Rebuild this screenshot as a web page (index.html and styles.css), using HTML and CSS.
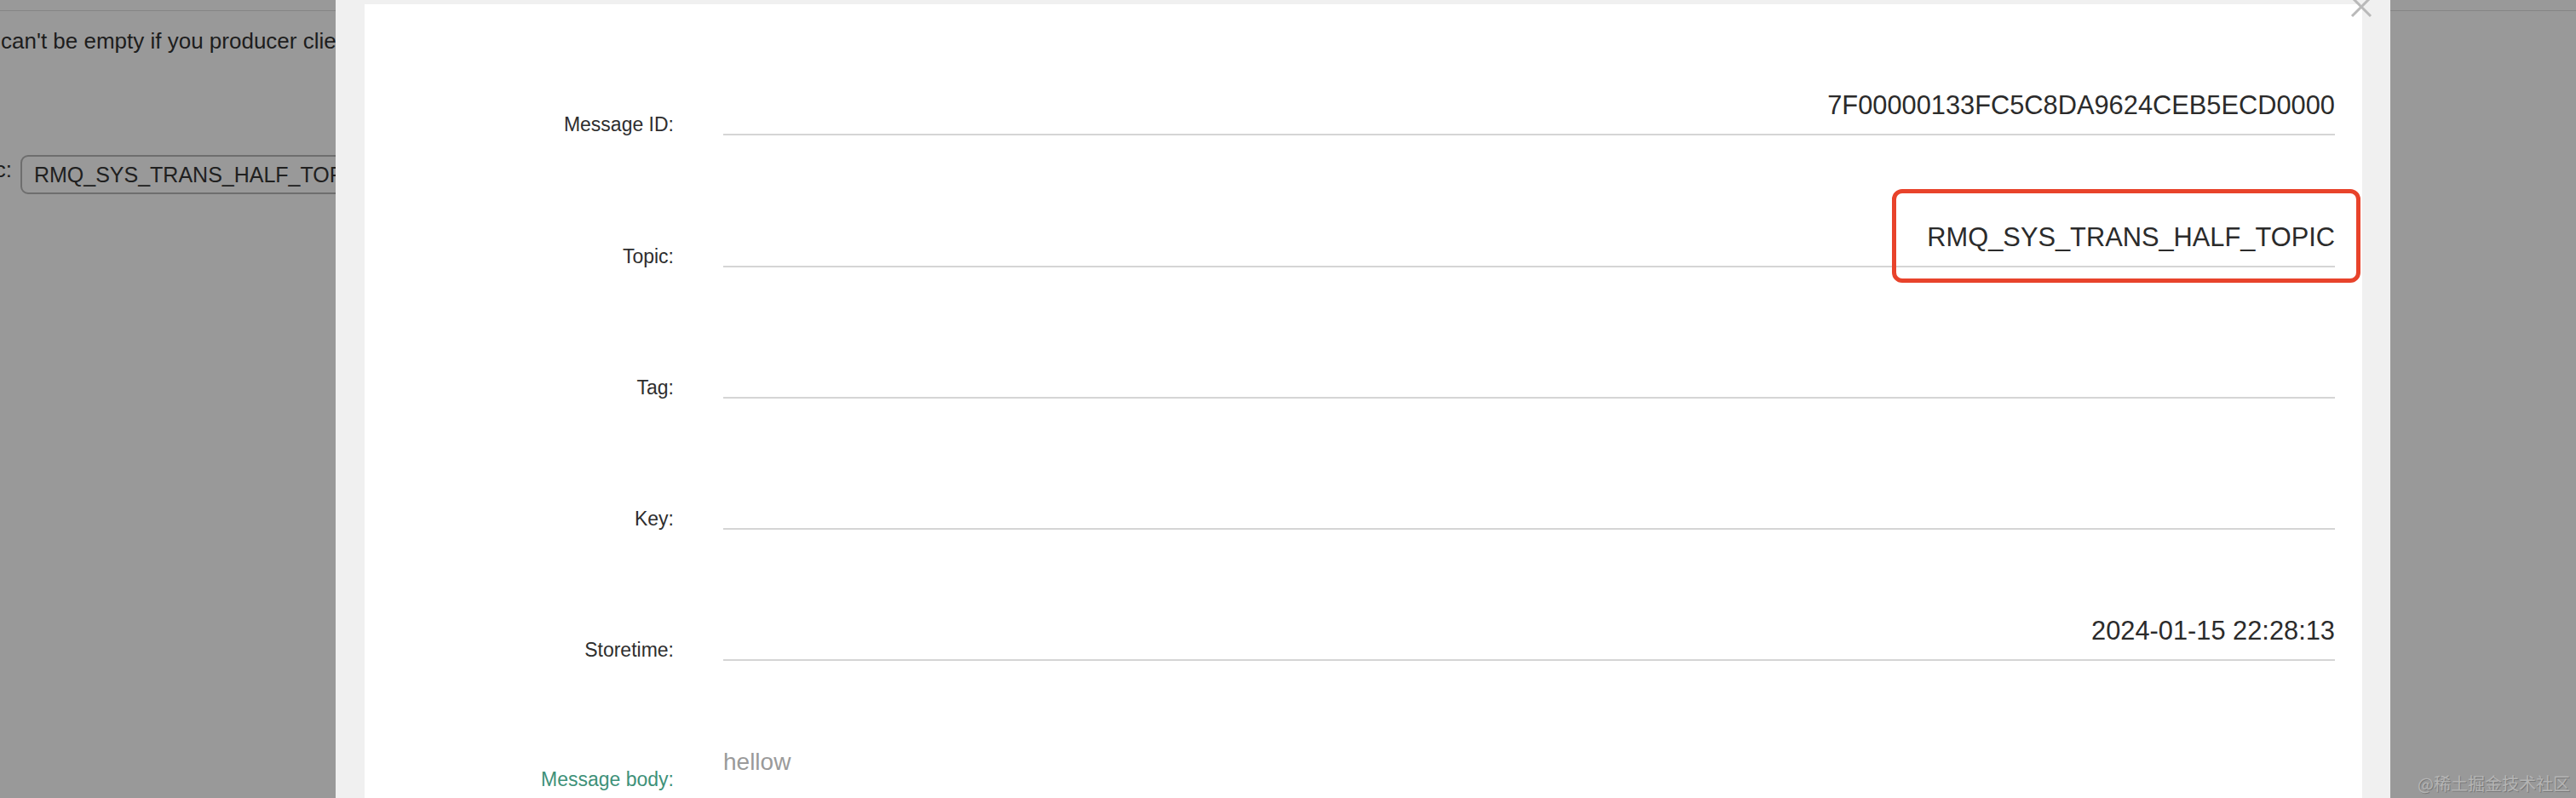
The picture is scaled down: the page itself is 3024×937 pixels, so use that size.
FILE: index.html
```html
<!DOCTYPE html>
<html lang="en">
<head>
<meta charset="utf-8">
<title>Message Detail</title>
<link rel="stylesheet" href="styles.css">
</head>
<body>
<div class="page">
  <div class="navbar"></div>
  <p class="warning">can't be empty if you producer client is not running the transaction</p>
  <div class="topic-row">
    <span class="topic-label">Topic:</span>
    <div class="topic-input">RMQ_SYS_TRANS_HALF_TOPIC</div>
  </div>
</div>

<div class="modal">
  <svg class="close" width="26" height="26" viewBox="0 0 26 26" aria-label="close">
    <path d="M2 2 L24 24 M24 2 L2 24" stroke="#b9b9b9" stroke-width="3" fill="none"/>
  </svg>
  <div class="modal-content">
    <div class="row">
      <label class="label">Message ID:</label>
      <div class="field">7F00000133FC5C8DA9624CEB5ECD0000</div>
    </div>
    <div class="row">
      <label class="label">Topic:</label>
      <div class="field">RMQ_SYS_TRANS_HALF_TOPIC<span class="highlight"></span></div>
    </div>
    <div class="row">
      <label class="label">Tag:</label>
      <div class="field"></div>
    </div>
    <div class="row">
      <label class="label">Key:</label>
      <div class="field"></div>
    </div>
    <div class="row">
      <label class="label">Storetime:</label>
      <div class="field">2024-01-15 22:28:13</div>
    </div>
    <div class="row row-body">
      <label class="label label-body">Message body:</label>
      <div class="body-text">hellow</div>
    </div>
  </div>
</div>

<div class="watermark">@稀土掘金技术社区</div>
</body>
</html>
```

FILE: styles.css
```css
html, body {
  margin: 0;
  padding: 0;
  height: 100%;
  overflow: hidden;
}

body {
  background: #999999;
  font-family: "Liberation Sans", Arial, sans-serif;
  position: relative;
}

/* background page (seen through the overlay) */
.page {
  color: #1d1d1d;
}

.navbar {
  height: 12px;
  border-bottom: 1px solid #858585;
}

.warning {
  margin: 20px 0 0 1px;
  font-size: 26px;
  line-height: 30px;
  white-space: nowrap;
}

.topic-row {
  display: flex;
  align-items: baseline;
  margin: 119px 0 0 -54px;
  gap: 10px;
}

.topic-label {
  font-size: 26px;
  position: relative;
  top: -6px;
}

.topic-input {
  height: 46px;
  box-sizing: border-box;
  width: 600px;
  border: 2px solid #6e6e6e;
  border-radius: 9px;
  padding: 0 14px;
  font-size: 25px;
  line-height: 42px;
  color: #202020;
  white-space: nowrap;
}

/* modal */
.modal {
  position: absolute;
  top: 0;
  left: 394px;
  width: 2412px;
  height: 100%;
  box-sizing: border-box;
  background: #f0f0f0;
  padding: 5px 33px 0 34px;
  display: flex;
  flex-direction: column;
}

.close {
  position: absolute;
  top: -5px;
  left: 2365px;
  z-index: 2;
}

.modal-content {
  background: #ffffff;
  flex: 1;
  padding-right: 32px;
}

.row {
  display: flex;
  align-items: flex-end;
  height: 154.25px;
}

.label {
  width: 363px;
  flex: none;
  text-align: right;
  font-size: 23px;
  line-height: 26px;
  color: #2e2e2e;
}

.field {
  position: relative;
  flex: 1;
  margin-left: 58px;
  border-bottom: 2px solid #d5d5d5;
  text-align: right;
  font-size: 30.8px;
  line-height: 34px;
  min-height: 34px;
  padding-bottom: 16px;
  color: #2b2b2b;
}

.highlight {
  position: absolute;
  right: -30px;
  bottom: -20px;
  width: 550px;
  height: 110px;
  box-sizing: border-box;
  border: 5px solid #e8432b;
  border-radius: 12px;
}

.row-body {
  align-items: flex-start;
  height: auto;
}

.label-body {
  margin-top: 125.75px;
  color: #3e9179;
}

.body-text {
  margin: 103px 0 0 58px;
  font-size: 28px;
  line-height: 32px;
  color: #9a9a9a;
}

.watermark {
  position: absolute;
  right: 7px;
  bottom: 5px;
  font-family: "Noto Sans CJK SC", sans-serif;
  font-size: 20px;
  line-height: 24px;
  color: #b4b4b4;
  text-shadow: 1px 1px 0 #7a7a7a;
}
```
